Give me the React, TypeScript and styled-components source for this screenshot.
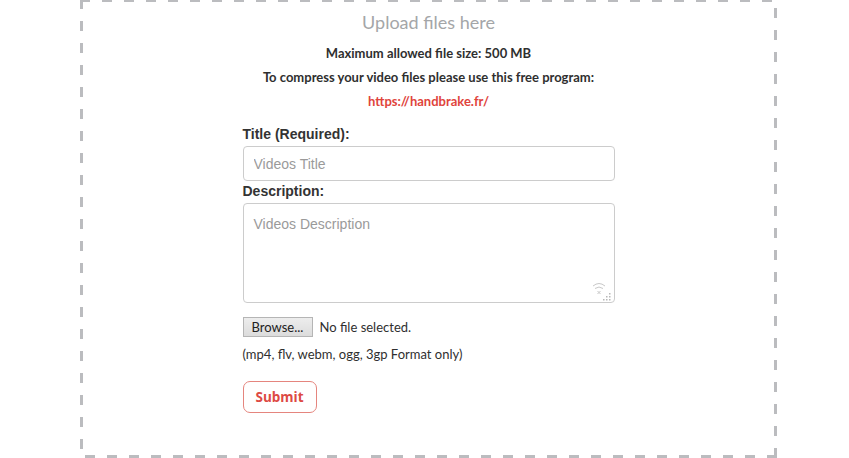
import React from "react";
import styled, { createGlobalStyle } from "styled-components";

const GlobalStyle = createGlobalStyle`
  html, body {
    margin: 0;
    padding: 0;
    background: #ffffff;
  }
  body {
    font-family: Lato, "Open Sans", sans-serif;
    color: #333333;
  }
`;

const Page = styled.div`
  width: 849px;
  height: 458px;
  overflow: hidden;
  display: flex;
  justify-content: flex-start;
`;

const dash = "#bbbcbf";

// long dashes like the reference (10px on, 12px off), drawn with gradients
const DropZone = styled.div`
  box-sizing: border-box;
  margin-left: 80px;
  margin-top: -1px;
  width: 697px;
  height: 459px;
  padding: 12px 3px 3px;
  background:
    repeating-linear-gradient(90deg, ${dash} 0 10px, transparent 10px 22px) left top / 100% 3px no-repeat,
    repeating-linear-gradient(270deg, ${dash} 0 10px, transparent 10px 22px) left bottom / 100% 3px no-repeat,
    repeating-linear-gradient(180deg, ${dash} 0 10px, transparent 10px 22px) left top / 3px 100% no-repeat,
    repeating-linear-gradient(0deg, ${dash} 0 10px, transparent 10px 22px) right top / 3px 100% no-repeat;
  display: flex;
  flex-direction: column;
  align-items: center;
`;

const Heading = styled.h3`
  margin: 0;
  font-family: Lato, sans-serif;
  font-weight: 400;
  font-size: 18px;
  line-height: 22px;
  color: #a4a6a8;
`;

const Note = styled.p<{ $top: number }>`
  margin: ${(p) => p.$top}px 0 0;
  font-family: Lato, sans-serif;
  font-weight: 700;
  font-size: 13px;
  line-height: 16px;
  color: #2f2f2f;
`;

const Link = styled.a`
  margin-top: 8px;
  font-family: Lato, sans-serif;
  font-weight: 700;
  font-size: 13px;
  line-height: 16px;
  color: #e0443c;
  text-decoration: none;
`;

const Form = styled.form`
  width: 372px;
  margin-top: 17px;
  display: flex;
  flex-direction: column;
`;

const Label = styled.label`
  font-family: "Liberation Sans", Arial, sans-serif;
  font-weight: 700;
  font-size: 14px;
  line-height: 16px;
  color: #333333;
  margin-bottom: 4px;
`;

const TextInput = styled.input`
  box-sizing: border-box;
  height: 35px;
  width: 100%;
  padding: 0 10px;
  border: 1px solid #cccccc;
  border-radius: 4px;
  font-family: "Liberation Sans", Arial, sans-serif;
  font-size: 14px;
  color: #555555;
  outline: none;
  margin-bottom: 2px;
  &::placeholder {
    color: #9a9a9a;
  }
`;

const AreaWrap = styled.div`
  position: relative;
  height: 100px;
`;

const TextArea = styled.textarea`
  box-sizing: border-box;
  width: 100%;
  height: 100%;
  padding: 12px 10px;
  border: 1px solid #cccccc;
  border-radius: 4px;
  font-family: "Liberation Sans", Arial, sans-serif;
  font-size: 14px;
  color: #555555;
  outline: none;
  resize: none;
  &::placeholder {
    color: #9a9a9a;
  }
`;

const Grip = styled.svg`
  position: absolute;
  right: 2px;
  bottom: 2px;
`;

const FileRow = styled.div`
  display: flex;
  align-items: center;
  gap: 7px;
  margin-top: 14px;
`;

const BrowseButton = styled.button`
  box-sizing: border-box;
  height: 20px;
  width: 70px;
  padding: 0;
  border: 1px solid #b5b5b5;
  background: linear-gradient(#ededed, #dcdcdc);
  font-family: Lato, sans-serif;
  font-size: 13px;
  color: #222222;
`;

const FileText = styled.span`
  font-family: Lato, sans-serif;
  font-size: 13px;
  color: #2f2f2f;
`;

const Formats = styled.p`
  margin: 9px 0 0;
  font-family: Lato, sans-serif;
  font-size: 13px;
  line-height: 16px;
  color: #2f2f2f;
`;

const SubmitButton = styled.button`
  align-self: flex-start;
  box-sizing: border-box;
  margin-top: 19px;
  height: 32px;
  width: 74px;
  border: 1px solid #e5857e;
  border-radius: 7px;
  background: #ffffff;
  color: #dd4a44;
  font-family: "Open Sans", sans-serif;
  font-weight: 700;
  font-size: 13.5px;
  cursor: pointer;
`;

export default function App() {
  return (
    <Page>
      <GlobalStyle />
      <DropZone>
        <Heading>Upload files here</Heading>
        <Note $top={12}>Maximum allowed file size: 500 MB</Note>
        <Note $top={8}>To compress your video files please use this free program:</Note>
        <Link href="#">https://handbrake.fr/</Link>
        <Form onSubmit={(e) => e.preventDefault()}>
          <Label>Title (Required):</Label>
          <TextInput placeholder="Videos Title" />
          <Label>Description:</Label>
          <AreaWrap>
            <TextArea placeholder="Videos Description" />
            <Grip width="22" height="20" viewBox="0 0 22 20">
              <g fill="none" stroke="#c8c8c8" strokeWidth="1">
                <path d="M2 5 Q8 0 14 5" />
                <path d="M4 7.5 Q8 4.5 12 7.5" />
                <path d="M6.5 10 L9.5 13 M9.5 10 L6.5 13" />
              </g>
              <g fill="#b8b8b8">
                <rect x="18" y="12" width="1.5" height="1.5" />
                <rect x="15" y="15" width="1.5" height="1.5" />
                <rect x="18" y="15" width="1.5" height="1.5" />
                <rect x="12" y="18" width="1.5" height="1.5" />
                <rect x="15" y="18" width="1.5" height="1.5" />
                <rect x="18" y="18" width="1.5" height="1.5" />
              </g>
            </Grip>
          </AreaWrap>
          <FileRow>
            <BrowseButton type="button">Browse...</BrowseButton>
            <FileText>No file selected.</FileText>
          </FileRow>
          <Formats>(mp4, flv, webm, ogg, 3gp Format only)</Formats>
          <SubmitButton type="submit">Submit</SubmitButton>
        </Form>
      </DropZone>
    </Page>
  );
}
